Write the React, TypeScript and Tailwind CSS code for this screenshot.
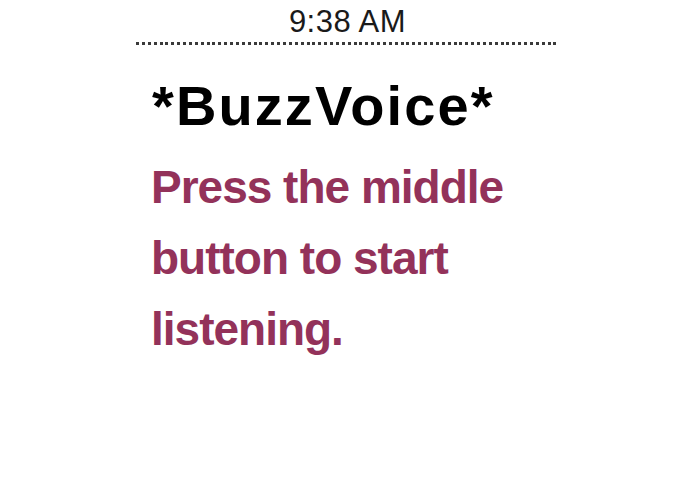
export default function App() {
  return (
    <div className="min-h-[494px] w-full bg-white">
      <div className="mx-auto w-[423px] font-['Liberation_Sans',Arial,sans-serif]">
        <div className="pt-[6px] text-center text-[31px] leading-[31px] tracking-[0.5px] text-[#1a1a1a]">
          9:38 AM
        </div>
        <div className="mt-[5px] h-[3px] bg-[repeating-linear-gradient(90deg,#3a3a3a_0_3px,transparent_3px_5.88px)]" />
        <h1 className="mt-[33px] pl-[16px] text-[56px] font-bold leading-[56px] tracking-[2.1px] text-black">
          *BuzzVoice*
        </h1>
        <p className="mt-[18px] pl-[15px] text-[46px] font-bold leading-[71px] tracking-[-1px] text-[#93325a]">
          Press the middle
          <br />
          button to start
          <br />
          listening.
        </p>
      </div>
    </div>
  );
}
